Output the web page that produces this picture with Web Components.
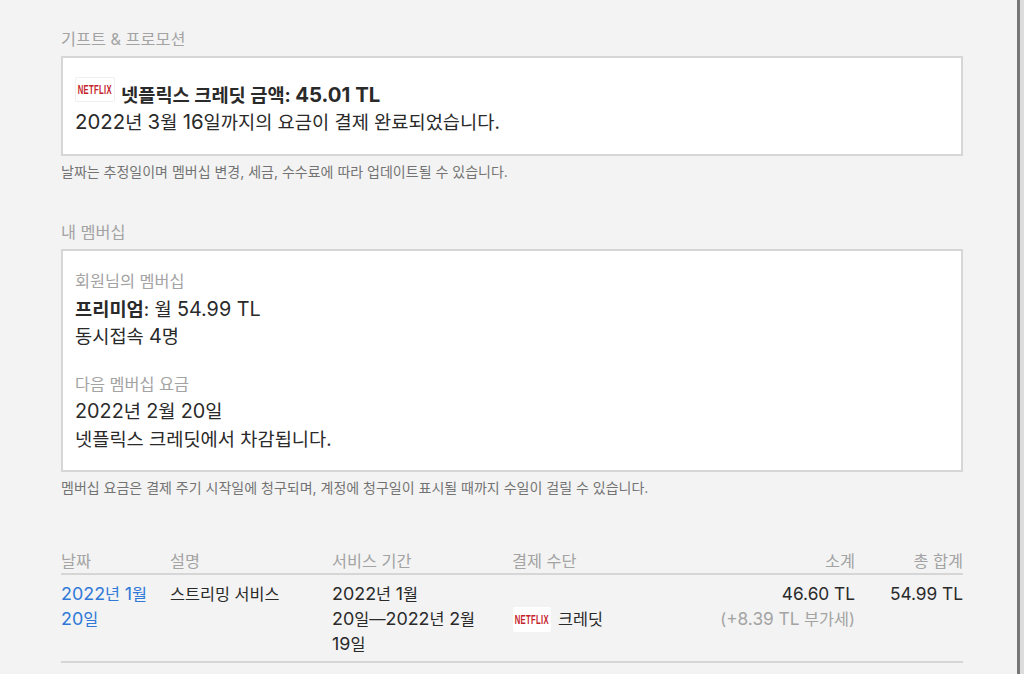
<!DOCTYPE html>
<html lang="ko">
<head>
<meta charset="utf-8">
<style>
  html, body { margin: 0; height: 100%; overflow: hidden; }
  body {
    background: #f3f3f3;
    font-family: "Inter", "Noto Sans CJK KR", sans-serif;
    color: #2a2a2a;
  }
</style>
</head>
<body>
<account-page>
  <account-section heading="기프트 &amp; 프로모션" note="날짜는 추정일이며 멤버십 변경, 세금, 수수료에 따라 업데이트될 수 있습니다.">
    <gift-credit></gift-credit>
  </account-section>
  <account-section heading="내 멤버십" note="멤버십 요금은 결제 주기 시작일에 청구되며, 계정에 청구일이 표시될 때까지 수일이 걸릴 수 있습니다.">
    <membership-info></membership-info>
  </account-section>
  <billing-table></billing-table>
</account-page>

<script>
class NetflixBadge extends HTMLElement {
  constructor() {
    super();
    this.attachShadow({ mode: "open" });
    this.shadowRoot.innerHTML = `
      <style>
        :host {
          display: inline-flex;
          align-items: center;
          justify-content: center;
          width: 40px;
          height: 25px;
          background: #fff;
          border-radius: 2px;
          flex: none;
        }
        :host([framed]) { box-shadow: inset 0 0 0 1px #efefef; }
        span {
          font: bold 12px "Liberation Sans", sans-serif;
          color: #c4242b;
          transform: scaleX(.64);
          white-space: nowrap;
          letter-spacing: .5px;
        }
      </style>
      <span>NETFLIX</span>`;
  }
}
customElements.define("netflix-badge", NetflixBadge);

class AccountPage extends HTMLElement {
  constructor() {
    super();
    this.attachShadow({ mode: "open" });
    this.shadowRoot.innerHTML = `
      <style>
        :host {
          display: block;
          height: 674px;
          box-sizing: border-box;
          padding: 29px 61px 0 61px;
          position: relative;
          overflow: hidden;
        }
        .edge {
          position: absolute;
          top: 0;
          bottom: 0;
          right: 4px;
          width: 3px;
          background: #777;
        }
        .edge::after {
          content: "";
          position: absolute;
          top: 0;
          bottom: 0;
          left: 3px;
          width: 4px;
          background: #dcdcdc;
        }
        .inner { width: 902px; }
      </style>
      <div class="inner"><slot></slot></div>
      <div class="edge"></div>`;
  }
}
customElements.define("account-page", AccountPage);

class AccountSection extends HTMLElement {
  constructor() {
    super();
    this.attachShadow({ mode: "open" });
    this.shadowRoot.innerHTML = `
      <style>
        :host { display: block; margin-bottom: 40px; }
        h2 {
          margin: 0 0 6px;
          font-size: 16.3px;
          font-weight: 400;
          line-height: 21px;
          color: #a3a3a3;
        }
        .card {
          background: #fff;
          border: 2px solid #d6d6d6;
          box-sizing: border-box;
          padding: 17px 12px;
        }
        p {
          margin: 6px 0 0;
          font-size: 14px;
          line-height: 20px;
          color: #737373;
        }
      </style>
      <h2></h2>
      <div class="card"><slot></slot></div>
      <p></p>`;
    this.shadowRoot.querySelector("h2").textContent = this.getAttribute("heading");
    this.shadowRoot.querySelector("p").textContent = this.getAttribute("note");
  }
}
customElements.define("account-section", AccountSection);

class GiftCredit extends HTMLElement {
  constructor() {
    super();
    this.attachShadow({ mode: "open" });
    this.shadowRoot.innerHTML = `
      <style>
        :host { display: block; font-size: 18.7px; line-height: 28px; }
        .top { display: flex; align-items: flex-end; gap: 6px; height: 34px; }
        netflix-badge { margin-bottom: 7px; }
        b { font-weight: 700; line-height: 27px; }
        i { font-style: normal; font-size: 1.09em; line-height: 1; }
      </style>
      <div class="top"><netflix-badge framed></netflix-badge><b>넷플릭스 크레딧 금액: <i>45.01 TL</i></b></div>
      <div><i>2022</i>년 <i>3</i>월 <i>16</i>일까지의 요금이 결제 완료되었습니다.</div>`;
  }
}
customElements.define("gift-credit", GiftCredit);

class MembershipInfo extends HTMLElement {
  constructor() {
    super();
    this.attachShadow({ mode: "open" });
    this.shadowRoot.innerHTML = `
      <style>
        :host { display: block; font-size: 18.7px; line-height: 27.5px; }
        .label { font-size: 16.3px; color: #a3a3a3; }
        .group + .group { margin-top: 20px; }
        b { font-weight: 700; }
        i { font-style: normal; font-size: 1.06em; line-height: 1; }
      </style>
      <div class="group">
        <div class="label">회원님의 멤버십</div>
        <div><b>프리미엄</b>: 월 <i>54.99 TL</i></div>
        <div>동시접속 <i>4</i>명</div>
      </div>
      <div class="group">
        <div class="label">다음 멤버십 요금</div>
        <div><i>2022</i>년 <i>2</i>월 <i>20</i>일</div>
        <div>넷플릭스 크레딧에서 차감됩니다.</div>
      </div>`;
  }
}
customElements.define("membership-info", MembershipInfo);

class BillingTable extends HTMLElement {
  constructor() {
    super();
    this.attachShadow({ mode: "open" });
    this.shadowRoot.innerHTML = `
      <style>
        :host { display: block; margin-top: 51px; font-size: 16.3px; }
        .row {
          display: grid;
          grid-template-columns: 109px 162px 180px 150px 193px 108px;
        }
        .head {
          color: #a3a3a3;
          line-height: 24px;
          border-bottom: 2px solid #d6d6d6;
        }
        .body {
          padding: 7px 0 4px;
          line-height: 25px;
          border-bottom: 2px solid #d6d6d6;
        }
        .r { text-align: right; }
        .link { color: #3079d8; padding-right: 15px; }
        .tax { color: #a3a3a3; white-space: nowrap; display: block; }
        .pay { display: flex; align-items: center; gap: 7px; align-self: center; padding-left: 1px; }
        netflix-badge { width: 38px; }
        .period { padding-right: 26px; word-break: keep-all; }
        .nb { white-space: nowrap; }
        i { font-style: normal; font-size: 1.06em; line-height: 1; }
        .link i, .period i { font-size: 1.1em; }
      </style>
      <div class="row head">
        <div>날짜</div><div>설명</div><div>서비스 기간</div><div>결제 수단</div>
        <div class="r">소계</div><div class="r">총 합계</div>
      </div>
      <div class="row body">
        <div class="link"><i>2022</i>년 <i>1</i>월 <i>20</i>일</div>
        <div>스트리밍 서비스</div>
        <div class="period"><i>2022</i>년 <i>1</i>월 <span class="nb"><i>20</i>일—<i>2022</i>년</span> <i>2</i>월 <i>19</i>일</div>
        <div class="pay"><netflix-badge></netflix-badge><span>크레딧</span></div>
        <div class="r"><i>46.60 TL</i><span class="tax">(<i>+8.39 TL</i> 부가세)</span></div>
        <div class="r"><i>54.99 TL</i></div>
      </div>`;
  }
}
customElements.define("billing-table", BillingTable);
</script>
</body>
</html>
